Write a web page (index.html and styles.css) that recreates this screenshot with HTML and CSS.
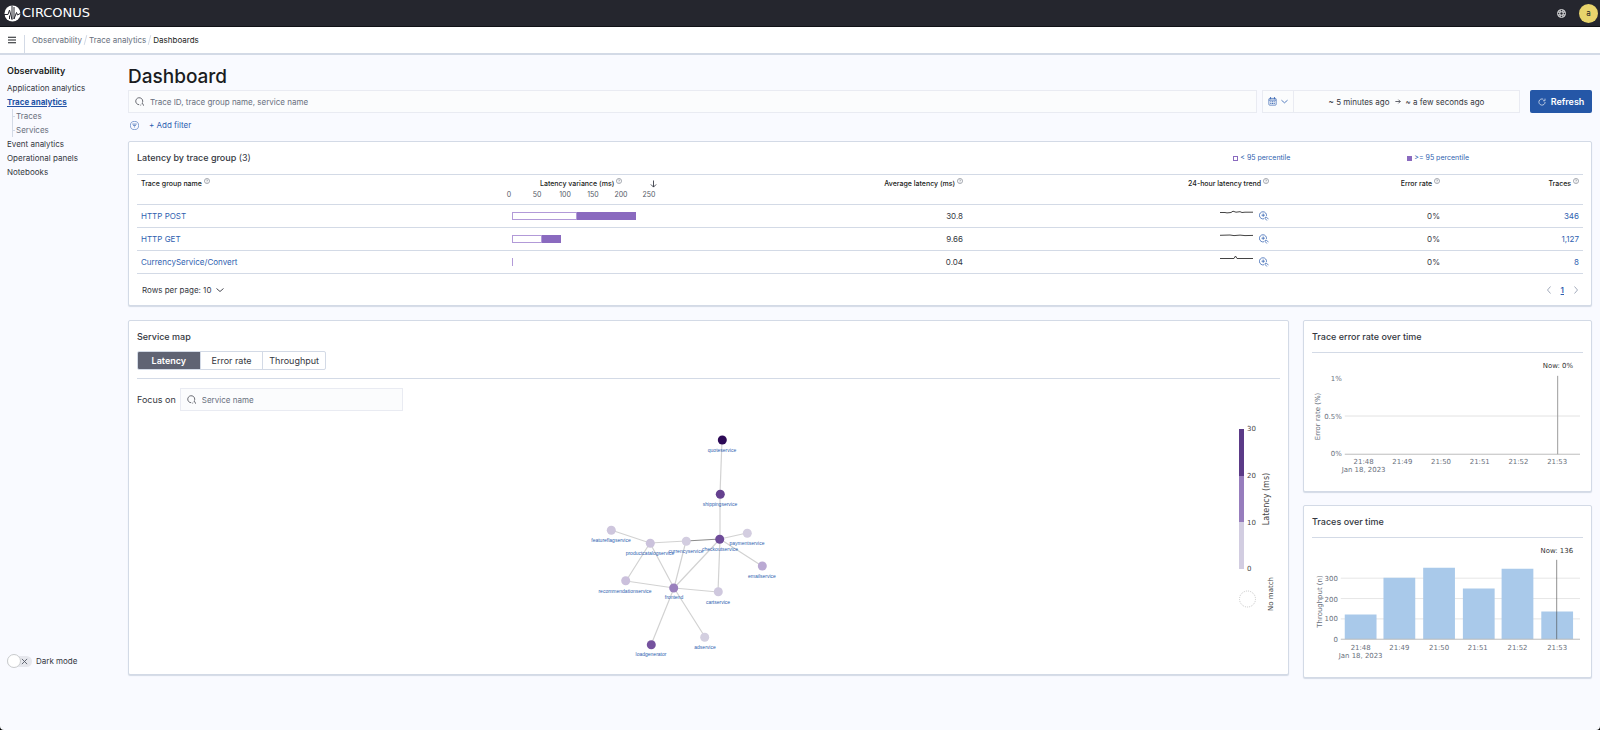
FILE: index.html
```html
<!DOCTYPE html>
<html lang="en">
<head>
<meta charset="utf-8">
<title>Trace analytics dashboard</title>
<link rel="stylesheet" href="styles.css">
</head>
<body>
<svg class="defs" aria-hidden="true">
  <defs>
    <symbol id="search" viewBox="0 0 16 16"><path d="M7.500 13.700A6.200 6.200 0 1 1 13.200 10M9.500 14.500l1.500-.5M12 11.500h1.500l2 4" fill="none" stroke="currentColor" stroke-width="1.300"/></symbol>
    <symbol id="info" viewBox="0 0 16 16"><circle cx="8" cy="8" r="6.800" fill="none" stroke="currentColor" stroke-width="1.500"/><path d="M6 6.200c.4-2.400 4.200-2 3.700.4C9.500 7.700 8 7.800 8 9.500M8 11v1.600" fill="none" stroke="currentColor" stroke-width="1.400"/></symbol>
    <symbol id="zoom-in" viewBox="0 0 16 16"><path d="M8 12.400A5.700 5.700 0 1 1 12 7.800M6.700 4v5.400M4 6.700h5.400M9.800 12.200l.2-2.200h2.200l3 3.200M10 12.200l2.600 3" fill="none" stroke="currentColor" stroke-width="1.200"/></symbol>
    <symbol id="chevron" viewBox="0 0 16 16"><path d="M1 5l7 6 7-6" fill="none" stroke="currentColor" stroke-width="1.800"/></symbol>
  </defs>
</svg>
<div class="app">
  <header class="topbar">
    <a class="brand" href="#">
      <svg class="brand-mark" viewBox="0 0 34 34" aria-hidden="true">
        <circle cx="17" cy="17" r="16" fill="#fff"/>
        <path d="M0 19h8l3-9 5 19V1M20 4v24l5-13 2 5 7-4M11 28l0-7" fill="none" stroke="#25262e" stroke-width="2"/>
      </svg>
      <span>CIRCONUS</span>
    </a>
    <div class="topbar-actions">
      <button class="icon-button help" aria-label="Help">
        <svg viewBox="0 0 16 16" aria-hidden="true"><circle cx="8" cy="8" r="7" fill="none" stroke="currentColor" stroke-width="1.500"/><rect x="5" y="5" width="6" height="6" rx="1.500" fill="none" stroke="currentColor" stroke-width="1.500"/><path d="M5.500 1v5M10.500 1v5M5.500 10v5M10.500 10v5M1 5.500h5M1 10.500h5M10 5.500h5M10 10.500h5" stroke="currentColor" stroke-width="1.200"/></svg>
      </button>
      <button class="avatar" aria-label="Account">a</button>
    </div>
  </header>

  <div class="navbar">
    <button class="icon-button menu" aria-label="Menu">
      <svg viewBox="0 0 9 9" aria-hidden="true"><path d="M0 1.500h9M0 4.500h9M0 7.500h9" stroke="currentColor" stroke-width="1.200"/></svg>
    </button>
    <nav class="breadcrumbs" aria-label="Breadcrumbs">
      <a href="#">Observability</a><i></i><a href="#">Trace analytics</a><i></i><span>Dashboards</span>
    </nav>
  </div>

  <div class="body">
    <aside class="sidebar">
      <nav aria-label="Observability">
        <h2>Observability</h2>
        <ul>
          <li><a href="#">Application analytics</a></li>
          <li><a class="current" href="#">Trace analytics</a>
            <ul class="sub">
              <li><a href="#">Traces</a></li>
              <li><a href="#">Services</a></li>
            </ul>
          </li>
          <li><a href="#">Event analytics</a></li>
          <li><a href="#">Operational panels</a></li>
          <li><a href="#">Notebooks</a></li>
        </ul>
      </nav>
      <label class="switch"><input type="checkbox" role="switch"><span class="track"><svg viewBox="0 0 8 8" aria-hidden="true"><path d="M1 1l6 6M7 1l-6 6" stroke="#535966" stroke-width="1"/></svg></span>Dark mode</label>
    </aside>

    <main class="main">
      <h1>Dashboard</h1>
      <div class="toolbar">
        <div class="field search-field">
          <svg class="icon" aria-hidden="true"><use href="#search"/></svg>
          <input type="search" aria-label="Search traces" placeholder="Trace ID, trace group name, service name">
        </div>
        <div class="datepicker">
          <button class="quick" aria-label="Quick date selection">
            <svg class="icon" viewBox="0 0 16 16" aria-hidden="true"><rect x="1.500" y="2.500" width="13" height="12" rx="1.500" fill="none" stroke="currentColor" stroke-width="1.200"/><path d="M1.500 5.500h13M4.500 0v4M11.500 0v4" stroke="currentColor" stroke-width="1.400"/><path d="M4 8.500h8M4 11.500h8" stroke="currentColor" stroke-width="1.600" stroke-dasharray="2 1"/></svg>
            <svg class="icon-small" aria-hidden="true"><use href="#chevron"/></svg>
          </button>
          <div class="range">
            <button>~ 5 minutes ago</button>
            <svg viewBox="0 0 8 8" aria-hidden="true"><path d="M.5 4h6.500M4.500 1.500L7 4 4.500 6.500" fill="none" stroke="currentColor"/></svg>
            <button>~ a few seconds ago</button>
          </div>
        </div>
        <button class="refresh">
          <svg viewBox="0 0 16 16" aria-hidden="true"><path d="M10.500 2.400A6.200 6.200 0 1 0 14.200 8M10 5.500h4V1.300" fill="none" stroke="currentColor" stroke-width="1.300"/></svg>
          Refresh
        </button>
      </div>
      <div class="filters">
        <button class="icon-button filter" aria-label="Filter options">
          <svg viewBox="0 0 16 16" aria-hidden="true"><circle cx="8" cy="8" r="7.300" fill="none" stroke="currentColor"/><path d="M4 5.500h8M5.500 8h5M7 10.500h2" stroke="currentColor" stroke-width="1.200"/></svg>
        </button>
        <button class="link-button">+ Add filter</button>
      </div>

      <section class="panel groups">
        <div class="panel-head">
          <h3>Latency by trace group <span>(3)</span></h3>
          <div class="legend">
            <button><i></i>&lt; 95 percentile</button>
            <button><i class="full"></i>&gt;= 95 percentile</button>
          </div>
        </div>
        <table>
          <colgroup><col class="c-name"><col class="c-variance"><col class="c-average"><col class="c-trend"><col class="c-error"><col class="c-traces"></colgroup>
          <thead>
            <tr>
              <th>Trace group name <svg aria-hidden="true"><use href="#info"/></svg></th>
              <th class="variance">
                <div class="variance-title"><span>Latency variance (ms) <svg aria-hidden="true"><use href="#info"/></svg></span><svg class="sort" viewBox="0 0 8 8" aria-label="Sorted descending"><path d="M4 0v7.500M1 4.500l3 3 3-3" fill="none" stroke="currentColor"/></svg></div>
                <div class="scale"><span>0</span><span>50</span><span>100</span><span>150</span><span>200</span><span>250</span></div>
              </th>
              <th class="num">Average latency (ms) <svg aria-hidden="true"><use href="#info"/></svg></th>
              <th class="num">24-hour latency trend <svg aria-hidden="true"><use href="#info"/></svg></th>
              <th class="num">Error rate <svg aria-hidden="true"><use href="#info"/></svg></th>
              <th class="num">Traces <svg aria-hidden="true"><use href="#info"/></svg></th>
            </tr>
          </thead>
          <tbody>
            <tr>
              <td><a href="#">HTTP POST</a></td>
              <td class="variance"><div class="bar"><i style="width:65px"></i><b style="width:59px"></b></div></td>
              <td class="num">30.8</td>
              <td><div class="trend"><svg class="spark" viewBox="0 0 33 6" aria-hidden="true"><path d="M0 3.500h5l2 .4 4-.4 2-1.300 3 1 4-.5 2 .8 3-.3h8"/></svg><button aria-label="Zoom in"><svg aria-hidden="true"><use href="#zoom-in"/></svg></button></div></td>
              <td class="num">0%</td>
              <td class="num"><a href="#">346</a></td>
            </tr>
            <tr>
              <td><a href="#">HTTP GET</a></td>
              <td class="variance"><div class="bar"><i style="width:30px"></i><b style="width:19px"></b></div></td>
              <td class="num">9.66</td>
              <td><div class="trend"><svg class="spark" viewBox="0 0 33 6" aria-hidden="true"><path d="M0 3.300l10-.3 4 .6 6-.5 5 .5 8-.2"/></svg><button aria-label="Zoom in"><svg aria-hidden="true"><use href="#zoom-in"/></svg></button></div></td>
              <td class="num">0%</td>
              <td class="num"><a href="#">1,127</a></td>
            </tr>
            <tr>
              <td><a href="#">CurrencyService/Convert</a></td>
              <td class="variance"><div class="bar"><i class="sliver" style="width:1px"></i></div></td>
              <td class="num">0.04</td>
              <td><div class="trend"><svg class="spark" viewBox="0 0 33 6" aria-hidden="true"><path d="M0 3.500h14l1.500-2.500 1.500 2.500h16"/></svg><button aria-label="Zoom in"><svg aria-hidden="true"><use href="#zoom-in"/></svg></button></div></td>
              <td class="num">0%</td>
              <td class="num"><a href="#">8</a></td>
            </tr>
          </tbody>
        </table>
        <div class="pager">
          <button class="per-page">Rows per page: 10 <svg aria-hidden="true"><use href="#chevron"/></svg></button>
          <div class="pages">
            <button class="prev" aria-label="Previous page"><svg aria-hidden="true"><use href="#chevron"/></svg></button>
            <a href="#" aria-current="page">1</a>
            <button class="next" aria-label="Next page"><svg aria-hidden="true"><use href="#chevron"/></svg></button>
          </div>
        </div>
      </section>

      <div class="columns">
        <section class="panel map">
          <h3>Service map</h3>
          <div class="segmented" role="group" aria-label="Metric">
            <button aria-pressed="true">Latency</button><button>Error rate</button><button>Throughput</button>
          </div>
          <div class="focus">
            <label for="focus">Focus on</label>
            <div class="field">
              <svg class="icon" aria-hidden="true"><use href="#search"/></svg>
              <input id="focus" type="search" placeholder="Service name">
            </div>
          </div>
          <div class="map-body">
            <svg class="graph" viewBox="137 411 1091 263" role="img" aria-label="Service map">
              <g stroke="#d2d2d2" stroke-width="1.200">
                <path d="M722 440L720 494V539M720 539L747 533M720 539L762 566M720 539L718 592M720 539L674 588M686 541L650 543M686 541L674 588M650 543L611 530M650 543L626 581M650 543L674 588M626 581L674 588M718 592L674 588M651 645L674 588M705 637L674 588" fill="none"/>
                <path d="M686 541L720 539" stroke="#8c8c8c"/>
              </g>
              <g>
                <circle cx="722.300" cy="440" r="4.500" fill="#2d0a56"/>
                <circle cx="720.300" cy="494.300" r="4.500" fill="#65418f"/>
                <circle cx="719.700" cy="539.300" r="4.500" fill="#6e4b99"/>
                <circle cx="747.300" cy="533.300" r="4.500" fill="#d3cde0"/>
                <circle cx="762.300" cy="566" r="4.500" fill="#baa9d3"/>
                <circle cx="686.300" cy="541.300" r="4.500" fill="#d3cde0"/>
                <circle cx="650.300" cy="543.300" r="4.500" fill="#cbc2dc"/>
                <circle cx="611.300" cy="530.300" r="4.500" fill="#cec6dd"/>
                <circle cx="625.700" cy="580.700" r="4.500" fill="#cbc0dc"/>
                <circle cx="673.700" cy="588" r="4.500" fill="#9a80bd"/>
                <circle cx="718.300" cy="591.700" r="4.500" fill="#cfc8de"/>
                <circle cx="651.300" cy="644.700" r="4.500" fill="#75529e"/>
                <circle cx="704.700" cy="637.300" r="4.500" fill="#d3cfe0"/>
              </g>
              <g class="node-labels">
                <text x="722" y="452">quoteservice</text>
                <text x="720" y="506">shippingservice</text>
                <text x="720" y="551">checkoutservice</text>
                <text x="747" y="545">paymentservice</text>
                <text x="762" y="578">emailservice</text>
                <text x="686" y="553">currencyservice</text>
                <text x="650" y="555">productcatalogservice</text>
                <text x="611" y="542">featureflagservice</text>
                <text x="625" y="593">recommendationservice</text>
                <text x="674" y="599">frontend</text>
                <text x="718" y="604">cartservice</text>
                <text x="651" y="656">loadgenerator</text>
                <text x="705" y="649">adservice</text>
              </g>
            </svg>
            <svg class="color-scale" viewBox="1228 411 52 263" role="img" aria-label="Latency scale">
              <rect x="1239" y="429" width="5" height="47" fill="#5b3a87"/>
              <rect x="1239" y="476" width="5" height="46" fill="#977dbd"/>
              <rect x="1239" y="522" width="5" height="47" fill="#d2cde1"/>
              <g class="ticks dark"><text x="1247" y="431">30</text><text x="1247" y="478">20</text><text x="1247" y="525">10</text><text x="1247" y="571">0</text></g>
              <circle cx="1247.500" cy="599" r="8" fill="none" stroke="#c8c8c8" stroke-dasharray="1 1"/>
              <text class="scale-title" transform="translate(1269 499) rotate(-90)">Latency (ms)</text>
              <text class="scale-note" transform="translate(1273 594) rotate(-90)">No match</text>
            </svg>
          </div>
        </section>

        <div class="charts">
          <section class="panel chart">
            <h3>Trace error rate over time</h3>
            <svg viewBox="1311 352 273 139" role="img" aria-label="Trace error rate over time">
              <path d="M1344 415.500h237" stroke="#e2e2e2"/><path d="M1344 454h237" stroke="#bdbdbd"/>
              <path d="M1558.500 375v79" stroke="#9b9b9b"/>
              <g class="ticks end"><text x="1341" y="380">1%</text><text x="1341" y="418">0.5%</text><text x="1341" y="456">0%</text></g>
              <g class="ticks mid"><text x="1363" y="464">21:48</text><text x="1363" y="472">Jan 18, 2023</text><text x="1402" y="464">21:49</text><text x="1441" y="464">21:50</text><text x="1480" y="464">21:51</text><text x="1519" y="464">21:52</text><text x="1558" y="464">21:53</text><text transform="translate(1319 416) rotate(-90)">Error rate (%)</text></g>
              <text class="now" x="1574" y="367">Now: 0%</text>
            </svg>
          </section>
          <section class="panel chart">
            <h3>Traces over time</h3>
            <svg viewBox="1311 537 273 140" role="img" aria-label="Traces over time">
              <path d="M1340 577.500h241M1340 598h241M1340 618.500h241" stroke="#e6e6e6"/>
              <g fill="#a9c9ea"><path d="M1344 614h32v25h-32zM1383 577h32v62h-32zM1423 567h32v72h-32zM1463 588h32v51h-32zM1502 568h32v71h-32zM1542 611h32v28h-32z"/></g>
              <path d="M1340 639h241" stroke="#bdbdbd"/>
              <path d="M1557.500 559v80" stroke="#444" stroke-opacity=".6"/>
              <g class="ticks end"><text x="1337" y="580">300</text><text x="1337" y="601">200</text><text x="1337" y="621">100</text><text x="1337" y="642">0</text></g>
              <g class="ticks mid"><text x="1360" y="650">21:48</text><text x="1360" y="658">Jan 18, 2023</text><text x="1399" y="650">21:49</text><text x="1439" y="650">21:50</text><text x="1478" y="650">21:51</text><text x="1518" y="650">21:52</text><text x="1558" y="650">21:53</text><text transform="translate(1321 601) rotate(-90)">Throughput (n)</text></g>
              <text class="now" x="1574" y="552">Now: 136</text>
            </svg>
          </section>
        </div>
      </div>
    </main>
  </div>
</div>
</body>
</html>
```
FILE: styles.css
```css
* { box-sizing: border-box; }
html { background: #000; }
body { margin: 0; font: 8px/14px Inter, "Liberation Sans", sans-serif; color: #343741; }
h1, h2, h3, ul { margin: 0; padding: 0; list-style: none; }
a { color: #2f5fb0; text-decoration: none; }
button, input { font: inherit; color: inherit; }
button { padding: 0; border: 0; background: none; cursor: pointer; }
svg { flex: none; }
.defs { position: absolute; width: 0; height: 0; }
.app { display: flex; flex-direction: column; min-height: 100vh; background: #f9faff; border-radius: 0 0 4px 4px; }

.topbar { display: flex; align-items: center; justify-content: space-between; height: 27px; padding: 0 2px 0 4px; background: #25262e; border-bottom: 1px solid #101116; }
.brand { display: flex; align-items: center; gap: 1px; color: #fff; font: 13px/16px "DejaVu Sans", sans-serif; }
.brand-mark { width: 17px; height: 17px; }
.topbar-actions { display: flex; align-items: center; gap: 13px; }
.icon-button { display: flex; }
.help { color: #fff; }
.help svg { width: 9px; height: 9px; }
.avatar { width: 19px; height: 19px; border-radius: 50%; background: #e8d46c; color: #222; }

.navbar { display: flex; align-items: flex-end; height: 28px; padding-left: 8px; background: #fff; border-bottom: 2px solid #d3dae6; }
.menu { height: 18px; padding-right: 8px; color: #1a1c21; }
.menu svg { width: 8px; height: 10px; }
.breadcrumbs { display: flex; height: 18px; padding-left: 7px; border-left: 1px solid #d3dae6; line-height: 10px; color: #1a1c21; }
.breadcrumbs a { color: #69707d; }
.breadcrumbs i { width: 1px; height: 10px; margin: 0 3px; background: #d3dae6; transform: rotate(15deg); }

.body { display: flex; flex: 1; }
.sidebar { display: flex; flex-direction: column; justify-content: space-between; flex: none; width: 128px; padding: 8px 8px 62px 7px; }
.sidebar h2 { margin-bottom: 3px; font-size: 9px; line-height: 15px; font-weight: 600; color: #1a1c21; }
.sidebar a { color: #343741; }
.sidebar .current { color: #2453a6; font-weight: 700; text-decoration: underline; }
.sub { margin-left: 5px; }
.sub li { display: flex; align-items: center; border-left: 1px solid #d3dae6; }
.sub li::before { width: 2px; height: 1px; margin-right: 1px; background: #d3dae6; content: ""; }
.sub a { color: #69707d; }
.switch { display: flex; align-items: center; gap: 4px; }
.switch input { position: absolute; opacity: 0; }
.track { display: flex; align-items: center; justify-content: flex-end; position: relative; width: 25px; height: 11px; padding-right: 4px; border-radius: 6px; background: #e6e7ed; }
.track::before { position: absolute; left: 0; width: 12px; height: 12px; border: 1px solid #c9cbcd; border-radius: 50%; background: #fff; content: ""; }
.track svg { width: 7px; height: 7px; }

.main { flex: 1; min-width: 0; padding: 10px 8px 16px 0; }
h1 { font-size: 19px; line-height: 24px; font-weight: 500; color: #1a1c21; }
.toolbar { display: flex; margin-top: 1px; }
.field { display: flex; align-items: center; height: 23px; padding: 0 6px; border: 1px solid #e9ebf2; background: #fbfcfd; gap: 6px; }
.field input { flex: 1; min-width: 0; padding: 0; border: 0; outline: 0; background: none; appearance: none; }
.field input::placeholder { color: #69707d; opacity: 1; }
.icon { width: 9px; height: 9px; }
.search-field { flex: 1; }
.datepicker { display: flex; flex: 0 0 258px; height: 23px; margin: 0 10px 0 5px; border: 1px solid #e9ebf2; background: #fbfcfd; }
.quick { display: flex; align-items: center; gap: 4px; padding: 0 5px; border-right: 1px solid #e9ebf2; color: #2f5fb0; }
.icon-small { width: 7px; height: 7px; }
.range { display: flex; flex: 1; align-items: center; justify-content: center; gap: 5px; }
.range svg { width: 6px; height: 7px; }
.refresh { display: flex; flex: 0 0 62px; align-items: center; justify-content: center; gap: 5px; height: 23px; border-radius: 2px; background: #2557a7; color: #fff; font-size: 9px; font-weight: 600; }
.refresh svg { width: 8px; height: 8px; }
.filters { display: flex; align-items: center; gap: 10px; height: 28px; padding-bottom: 4px; color: #2f5fb0; }
.filter { padding-left: 2px; }
.filter svg { width: 9px; height: 9px; }

.panel { border: 1px solid #d3dae6; border-radius: 2px; background: #fff; box-shadow: 0 1px 1px #d3dae6; padding: 0 8px; }
h3 { font-size: 9px; line-height: 14px; font-weight: 500; color: #343741; }
h3 span { font-weight: 400; }
.panel-head { display: flex; align-items: center; justify-content: space-between; height: 32px; }
.legend { display: flex; gap: 117px; padding-right: 114px; font-size: 7px; color: #2f5fb0; }
.legend button { display: flex; align-items: center; gap: 2px; }
.legend i { width: 5px; height: 5px; border: 1px solid #8a6abf; }
.legend .full { background: #8a6abf; }
table { width: 100%; table-layout: fixed; border-collapse: collapse; }
.c-variance { width: 178px; }
.c-average { width: 296px; }
.c-trend { width: 306px; }
.c-error { width: 171px; }
.c-traces { width: 139px; }
th { height: 30px; padding: 3px 4px 0; border-top: 1px solid #d3dae6; border-bottom: 1px solid #d3dae6; font-size: 7px; line-height: 12px; font-weight: 500; text-align: left; vertical-align: top; color: #1a1c21; }
th svg { width: 6px; height: 6px; vertical-align: 2px; color: #69707d; }
td { height: 23px; padding: 0 4px; border-bottom: 1px solid #d3dae6; vertical-align: middle; }
.num { text-align: right; }
.variance { padding-left: 2px; }
.variance-title { display: flex; gap: 28px; padding-left: 45px; white-space: nowrap; }
.variance-title .sort { width: 7px; height: 8px; margin-top: 2px; color: #343741; }
.scale { display: flex; width: 168px; line-height: 9px; font-weight: 400; color: #535966; }
.scale span { flex: 1; text-align: center; }
.bar { display: flex; height: 8px; padding-left: 17px; }
.bar i { border: 1px solid #b29ad8; background: #fff; }
.bar b { background: #8a6abf; }
.bar .sliver { border-width: 0 0 0 1px; }
.trend { display: flex; justify-content: flex-end; gap: 6px; height: 14px; }
.spark { width: 33px; height: 6px; fill: none; stroke: #444; }
.trend button { display: flex; align-items: center; color: #2f5fb0; }
.trend button svg { width: 10px; height: 10px; }
.pager { display: flex; align-items: center; justify-content: space-between; height: 31px; padding: 0 3px 0 5px; }
.pager svg { width: 8px; height: 8px; }
.per-page, .pages { display: flex; align-items: center; gap: 5px; }
.pages { gap: 8px; }
.pages button { display: flex; color: #98a2b3; }
.pages a { font-weight: 600; text-decoration: underline; }
.prev { transform: rotate(90deg); }
.next { transform: rotate(-90deg); }

.columns { display: grid; grid-template-columns: minmax(0, 1161fr) minmax(0, 289fr); align-items: start; gap: 14px; margin-top: 14px; }
.map { padding-top: 9px; }
.segmented { display: flex; width: 189px; height: 19px; margin: 7px 0 8px; border: 1px solid #d3dae6; border-radius: 2px; overflow: hidden; font-size: 9px; }
.segmented button { flex: 1; border-left: 1px solid #d3dae6; }
.segmented button:first-child { border-left: 0; }
.segmented [aria-pressed="true"] { background: #5f6373; color: #fff; font-weight: 600; }
.focus { display: flex; align-items: center; gap: 4px; padding-top: 9px; border-top: 1px solid #d3dae6; font-size: 9px; }
.focus .field { width: 223px; font-size: 8px; }
.map-body { display: flex; }
.graph { flex: 1091 1 0; min-width: 0; }
.color-scale { flex: 52 1 0; min-width: 0; }
.node-labels { font: 5px "Liberation Sans", sans-serif; text-anchor: middle; fill: #2f5fb0; }
.ticks { font: 7px "DejaVu Sans", sans-serif; fill: #69707d; }
.ticks.dark { fill: #444; }
.ticks.end { text-anchor: end; }
.ticks.mid { text-anchor: middle; }
.scale-title { font: 8px "DejaVu Sans", sans-serif; text-anchor: middle; fill: #444; }
.scale-note { font: 7px "DejaVu Sans", sans-serif; text-anchor: middle; fill: #444; }
.now { font: 7px "DejaVu Sans", sans-serif; text-anchor: end; fill: #333; }
.charts { display: flex; flex-direction: column; gap: 13px; }
.chart { padding-top: 9px; }
.chart h3 { padding-bottom: 8px; border-bottom: 1px solid #d3dae6; }
.chart > svg { display: block; width: 100%; }
```
